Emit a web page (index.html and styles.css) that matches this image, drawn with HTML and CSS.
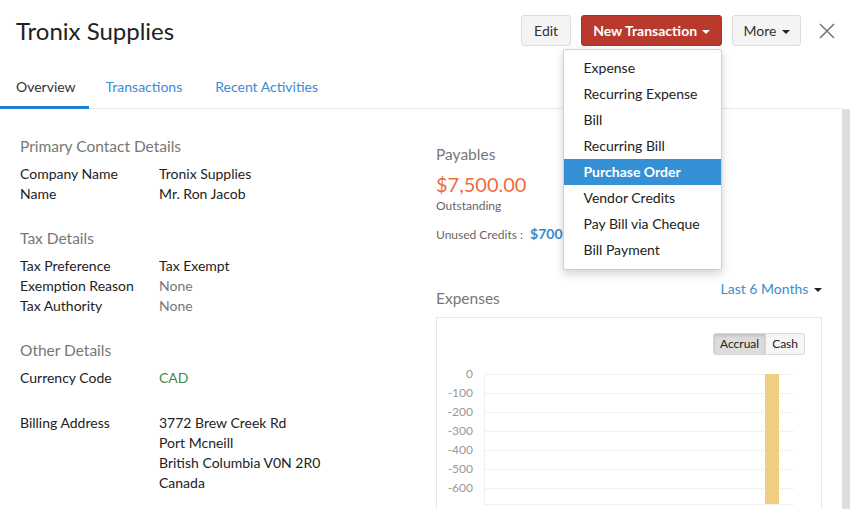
FILE: index.html
```html
<!DOCTYPE html>
<html>

<head>
    <title>Tronix Supplies</title>
    <link rel="stylesheet" href="styles.css">
</head>

<body>
    <header class="top">
        <h1 class="title">Tronix Supplies</h1>
        <div class="actions">
            <button class="btn btn-edit">Edit</button>
            <div class="drop">
                <button class="btn btn-red">New Transaction <span class="caret"></span></button>
                <ul class="menu">
                    <li>Expense</li>
                    <li>Recurring Expense</li>
                    <li>Bill</li>
                    <li>Recurring Bill</li>
                    <li class="active">Purchase Order</li>
                    <li>Vendor Credits</li>
                    <li>Pay Bill via Cheque</li>
                    <li>Bill Payment</li>
                </ul>
            </div>
            <button class="btn btn-more">More <span class="caret dark"></span></button>
            <svg class="close" width="16" height="16" viewBox="0 0 16 16">
                <path d="M1 1 L15 15 M15 1 L1 15" stroke="#777" stroke-width="1.6" fill="none" />
            </svg>
        </div>
    </header>

    <nav class="tabs">
        <a class="tab current">Overview</a>
        <a class="tab">Transactions</a>
        <a class="tab">Recent Activities</a>
    </nav>

    <div class="body">
        <div class="content">
            <div class="details">
                <h3>Primary Contact Details</h3>
                <div class="row"><span class="label">Company Name</span><span>Tronix Supplies</span></div>
                <div class="row"><span class="label">Name</span><span>Mr. Ron Jacob</span></div>

                <h3 class="next">Tax Details</h3>
                <div class="row"><span class="label">Tax Preference</span><span>Tax Exempt</span></div>
                <div class="row"><span class="label">Exemption Reason</span><span class="muted">None</span></div>
                <div class="row"><span class="label">Tax Authority</span><span class="muted">None</span></div>

                <h3 class="next">Other Details</h3>
                <div class="row"><span class="label">Currency Code</span><span class="green">CAD</span></div>
                <div class="row address">
                    <span class="label">Billing Address</span>
                    <span>3772 Brew Creek Rd<br>Port Mcneill<br>British Columbia V0N 2R0<br>Canada</span>
                </div>
            </div>

            <div class="summary">
                <h3 class="payables">Payables</h3>
                <div class="amount">$7,500.00</div>
                <div class="small">Outstanding</div>
                <div class="credits">Unused Credits : <span class="credit-value">$700.00</span></div>

                <div class="exp-head">
                    <h3>Expenses</h3>
                    <a class="period">Last 6 Months <span class="caret dark"></span></a>
                </div>

                <div class="chart-box">
                    <div class="toggle">
                        <span class="on">Accrual</span><span>Cash</span>
                    </div>
                    <svg class="chart" width="384" height="150" viewBox="0 0 384 150">
                        <g stroke="#f1f1f1" stroke-width="1">
                            <line x1="47" y1="10.5" x2="357" y2="10.5" />
                            <line x1="47" y1="29.5" x2="357" y2="29.5" />
                            <line x1="47" y1="48.5" x2="357" y2="48.5" />
                            <line x1="47" y1="67.5" x2="357" y2="67.5" />
                            <line x1="47" y1="86.5" x2="357" y2="86.5" />
                            <line x1="47" y1="105.5" x2="357" y2="105.5" />
                            <line x1="47" y1="124.5" x2="357" y2="124.5" />
                            <line x1="47" y1="140.5" x2="357" y2="140.5" />
                            <line x1="47.5" y1="10" x2="47.5" y2="141" />
                        </g>
                        <g class="axis" text-anchor="end">
                            <text x="36" y="14">0</text>
                            <text x="36" y="33">-100</text>
                            <text x="36" y="52">-200</text>
                            <text x="36" y="71">-300</text>
                            <text x="36" y="90">-400</text>
                            <text x="36" y="109">-500</text>
                            <text x="36" y="128">-600</text>
                        </g>
                        <rect x="328" y="10" width="14" height="130" fill="#f0cd80" />
                    </svg>
                </div>
            </div>
        </div>
        <div class="scroll"></div>
    </div>
</body>

</html>
```

FILE: styles.css
```css
body {
    font-family: Lato, "Open Sans", sans-serif;
    font-size: 14px;
    color: #222;
    margin: 0;
    padding: 0;
    height: 509px;
    overflow: hidden;
    background-color: #fff;
}

.top {
    display: flex;
    justify-content: space-between;
    align-items: center;
    padding: 15px 15px 0 16px;
}

.title {
    margin: 0;
    font-size: 24px;
    line-height: 28px;
    font-weight: normal;
    color: #222;
}

.actions {
    display: flex;
    align-items: center;
    gap: 10px;
}

.btn {
    font-family: inherit;
    font-size: 14px;
    height: 31px;
    padding: 0 12px;
    color: #333;
    background-color: #f4f4f4;
    border: 1px solid #dcdcdc;
    border-radius: 3px;
}

.btn-red {
    color: #fff;
    font-weight: bold;
    background-color: #b9392c;
    border-color: #a93226;
    padding: 0 11px;
}

.btn-more {
    padding: 0 10px;
}

.caret {
    display: inline-block;
    width: 0;
    height: 0;
    margin-left: 2px;
    vertical-align: middle;
    border-top: 4px solid #fff;
    border-left: 4px solid transparent;
    border-right: 4px solid transparent;
}

.caret.dark {
    border-top-color: #222;
}

.close {
    margin-left: 8px;
}

.drop {
    position: relative;
}

.menu {
    position: absolute;
    right: 0;
    top: 34px;
    width: 159px;
    margin: 0;
    padding: 5px 0 6px;
    list-style: none;
    background-color: #fff;
    border: 1px solid #d0d0d0;
    border-radius: 2px;
    box-shadow: 0 4px 10px rgba(0, 0, 0, 0.18);
    z-index: 5;
    box-sizing: border-box;
}

.menu li {
    line-height: 26px;
    padding: 0 19px;
    color: #222;
    white-space: nowrap;
}

.menu li.active {
    background-color: #3590d6;
    color: #fff;
    font-weight: bold;
}

.tabs {
    display: flex;
    margin-top: 18px;
    margin-right: 8px;
    border-bottom: 1px solid #e8e8e8;
}

.tab {
    padding: 13px 16px 9px;
    line-height: 20px;
    font-size: 14px;
    color: #3d8bd0;
    margin-right: 1px;
}

.tab.current {
    color: #333;
    border-bottom: 3px solid #1e7fd0;
    margin-bottom: -1px;
    padding-right: 13px;
}

.body {
    display: flex;
}

.content {
    flex: 1;
    display: grid;
    grid-template-columns: 1fr 386px;
    padding: 27px 20px 0;
}

.scroll {
    width: 8px;
    height: 401px;
    background-color: #dedede;
}

h3 {
    margin: 0 0 8px;
    font-size: 15.5px;
    line-height: 20px;
    font-weight: normal;
    color: #777;
}

h3.next {
    margin-top: 24px;
}

.row {
    display: flex;
    line-height: 20px;
}

.label {
    width: 139px;
    flex-shrink: 0;
}

.muted {
    color: #777;
}

.green {
    color: #3d8b4a;
}

.address {
    margin-top: 25px;
}

.payables {
    margin-top: 8px;
}

.amount {
    font-size: 20px;
    line-height: 24px;
    color: #f26a3c;
}

.small {
    margin-top: 2px;
    font-size: 12px;
    line-height: 16px;
    color: #666;
}

.credits {
    margin-top: 11px;
    font-size: 12px;
    line-height: 18px;
    color: #666;
}

.credit-value {
    margin-left: 4px;
    font-size: 14px;
    font-weight: bold;
    color: #3a8ad0;
}

.exp-head {
    display: flex;
    justify-content: space-between;
    align-items: flex-start;
    margin-top: 35px;
}

.exp-head h3 {
    margin: 9px 0 0;
}

.period {
    line-height: 20px;
    color: #3d8bd0;
}

.chart-box {
    margin-top: 9px;
    border: 1px solid #e8e8e8;
    height: 200px;
}

.toggle {
    display: flex;
    justify-content: flex-end;
    padding: 15px 16px 0 0;
    font-size: 12px;
}

.toggle span {
    line-height: 20px;
    padding: 0 6px;
    border: 1px solid #d6d6d6;
    background-color: #f6f6f6;
}

.toggle .on {
    background-color: #dcdcdc;
    border-radius: 3px 0 0 3px;
    box-shadow: inset 0 2px 3px rgba(0, 0, 0, 0.12);
}

.toggle span + span {
    border-left: none;
    border-radius: 0 3px 3px 0;
}

.chart {
    display: block;
    margin-top: 9px;
}

.axis text {
    font-family: Lato, sans-serif;
    font-size: 12px;
    fill: #999;
}
```
